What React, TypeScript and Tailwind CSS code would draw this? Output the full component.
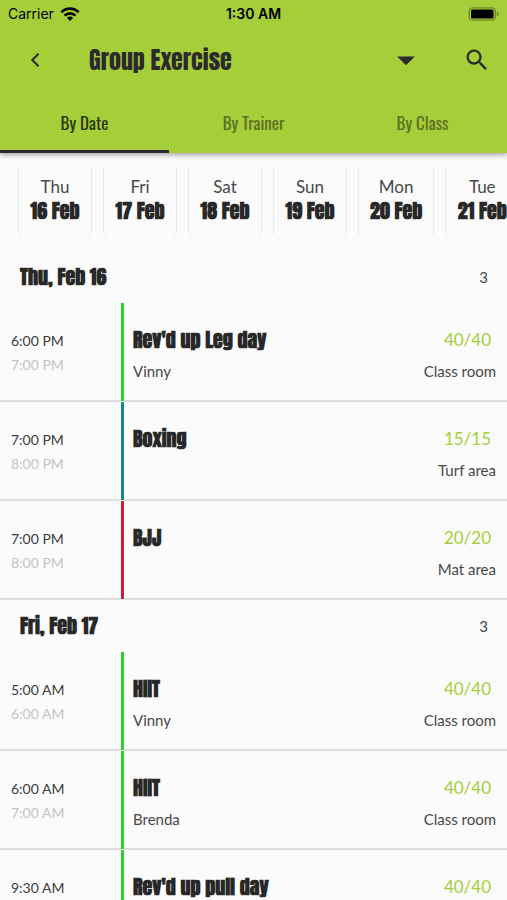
import { MdArrowDropDown, MdSearch } from "react-icons/md";

const HEADING = "font-['Anton','Liberation_Sans_Narrow','Arial_Narrow',sans-serif]";

const days = [
  { day: "Thu", date: "16 Feb" },
  { day: "Fri", date: "17 Feb" },
  { day: "Sat", date: "18 Feb" },
  { day: "Sun", date: "19 Feb" },
  { day: "Mon", date: "20 Feb" },
  { day: "Tue", date: "21 Feb" },
];

type GymClass = {
  start: string;
  end: string;
  name: string;
  trainer?: string;
  spots: string;
  room: string;
  bar: string;
};

const sections: { title: string; count: number; classes: GymClass[] }[] = [
  {
    title: "Thu, Feb 16",
    count: 3,
    classes: [
      { start: "6:00 PM", end: "7:00 PM", name: "Rev'd up Leg day", trainer: "Vinny", spots: "40/40", room: "Class room", bar: "bg-[#32cd32]" },
      { start: "7:00 PM", end: "8:00 PM", name: "Boxing", spots: "15/15", room: "Turf area", bar: "bg-[#108c8c]" },
      { start: "7:00 PM", end: "8:00 PM", name: "BJJ", spots: "20/20", room: "Mat area", bar: "bg-[#dc143c]" },
    ],
  },
  {
    title: "Fri, Feb 17",
    count: 3,
    classes: [
      { start: "5:00 AM", end: "6:00 AM", name: "HIIT", trainer: "Vinny", spots: "40/40", room: "Class room", bar: "bg-[#32cd32]" },
      { start: "6:00 AM", end: "7:00 AM", name: "HIIT", trainer: "Brenda", spots: "40/40", room: "Class room", bar: "bg-[#32cd32]" },
      { start: "9:30 AM", end: "10:30 AM", name: "Rev'd up pull day", trainer: "Vinny", spots: "40/40", room: "Class room", bar: "bg-[#32cd32]" },
    ],
  },
];

function StatusBar() {
  return (
    <div className="grid h-7 grid-cols-3 items-center px-2 font-['Inter',sans-serif] text-sm text-black">
      <div className="flex items-center gap-1.5">
        <span>Carrier</span>
        <svg width="20" height="14" viewBox="0 0 20 14" fill="none" stroke="currentColor" strokeWidth="2.7">
          <path d="M1.400 5.200a12.300 12.300 0 0 1 17.200 0" />
          <path d="M4.600 8.600a7.800 7.800 0 0 1 10.800 0" />
          <path d="M10 14 6.900 10.900a4.400 4.400 0 0 1 6.200 0Z" fill="currentColor" stroke="none" />
        </svg>
      </div>
      <span className="text-center font-semibold">1:30 AM</span>
      <svg className="justify-self-end" width="31" height="14" viewBox="0 0 31 14">
        <rect x="1.2" y="0.9" width="26.2" height="12.2" rx="3.6" fill="none" stroke="#000" strokeWidth="1.4" strokeOpacity="0.35" />
        <rect x="3" y="2.5" width="22.5" height="9" rx="1.5" />
        <path d="M29 4.8v4.400c1-.4 1.600-1.200 1.600-2.200s-.6-1.800-1.600-2.200Z" fillOpacity="0.4" />
      </svg>
    </div>
  );
}

function ClassRow({ item }: { item: GymClass }) {
  return (
    <li className="flex h-[99px]">
      <div className="w-[121px] shrink-0 border-b-2 border-[#dfdfdf] pt-[26px] pl-[11px] text-sm leading-6">
        <p className="text-[#3c3c3c]">{item.start}</p>
        <p className="text-[#c4c4c4]">{item.end}</p>
      </div>
      <div className={`mb-px w-[3px] shrink-0 ${item.bar}`} />
      <div className="flex flex-1 justify-between border-b-2 border-[#dfdfdf] pt-5 pr-[11px] pl-[9px]">
        <div>
          <h3 className={`${HEADING} text-xl leading-[34px] font-bold text-[#282828]`}>{item.name}</h3>
          <p className="text-[15px] leading-7 text-[#484848]">{item.trainer}</p>
        </div>
        <div className="text-right">
          <p className="pr-[5px] text-[17px] leading-[34px] text-[#a6ce39]">{item.spots}</p>
          <p className="text-[15px] leading-7 text-[#484848]">{item.room}</p>
        </div>
      </div>
    </li>
  );
}

export default function App() {
  return (
    <div className="h-screen overflow-hidden bg-[#fbfbfb] font-['Lato',sans-serif]">
      <header className="relative bg-[#a6ce39] shadow-[0_2px_5px_rgba(0,0,0,0.35)]">
        <StatusBar />
        <div className="flex h-16 items-center pr-4 pl-[23px] text-[#2b2b2b]">
          <button type="button" aria-label="Back" className="flex size-6 items-center justify-center">
            <svg width="10" height="16" viewBox="0 0 10 16" fill="none" stroke="currentColor" strokeWidth="2">
              <path d="M8.500 1.700 2.300 8l6.200 6.300" />
            </svg>
          </button>
          <h1 className={`${HEADING} ml-[42px] flex-1 text-2xl font-normal`}>Group Exercise</h1>
          <button type="button" aria-label="Filter" className="mr-9">
            <MdArrowDropDown className="size-[42px]" />
          </button>
          <button type="button" aria-label="Search">
            <MdSearch className="size-7" />
          </button>
        </div>
        <nav className="grid h-[61px] grid-cols-3 font-['Oswald','Liberation_Sans_Narrow','Arial_Narrow',sans-serif] text-[17px]">
          <button type="button" className="border-b-[3px] border-[#2b2b2b] pt-1 text-[#2b3617]">By Date</button>
          <button type="button" className="border-b-[3px] border-transparent pt-1 text-[#5a7024]">By Trainer</button>
          <button type="button" className="border-b-[3px] border-transparent pt-1 text-[#5a7024]">By Class</button>
        </nav>
      </header>

      <div className="flex gap-[11px] overflow-hidden pt-[14px] pl-[18px]">
        {days.map(({ day, date }) => (
          <button
            key={date}
            type="button"
            className="h-[72px] min-w-[74px] shrink-0 rounded-b-lg border-x border-[#ebebeb] px-[11px] pb-2"
          >
            <span className="block text-[17px] leading-6 text-[#484848]">{day}</span>
            <span className={`${HEADING} block text-xl leading-6 font-bold text-[#282828]`}>{date}</span>
          </button>
        ))}
      </div>

      <main className="pt-3">
        {sections.map((section) => (
          <section key={section.title}>
            <div className="flex h-[52px] items-center justify-between pr-[19px] pl-5">
              <h2 className={`${HEADING} text-xl font-bold text-[#282828]`}>{section.title}</h2>
              <span className="text-[15px] text-[#484848]">{section.count}</span>
            </div>
            <ul>
              {section.classes.map((item) => (
                <ClassRow key={item.start + item.name} item={item} />
              ))}
            </ul>
          </section>
        ))}
      </main>
    </div>
  );
}
